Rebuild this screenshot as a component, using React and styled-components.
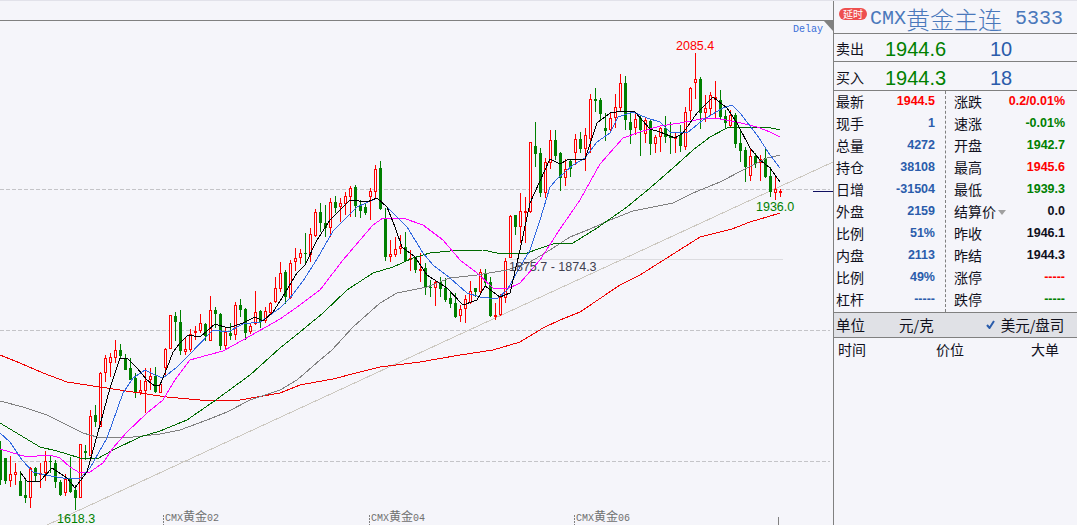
import React from 'react';
import styled, { createGlobalStyle } from 'styled-components';

const CJK = '"Noto Sans CJK SC", "Liberation Sans", sans-serif';
const NUM = '"Liberation Sans", "Noto Sans CJK SC", sans-serif';
const MONO = '"Liberation Mono", "Noto Sans CJK SC", monospace';
const BG = '#f5f5fa';
const RULE = '#808080';
const RED = '#ff0000';
const GREEN = '#008000';
const BLUE = '#2a5cab';
const DARK = '#10101c';

const tones = { red: RED, green: GREEN, blue: BLUE, dark: DARK };

const GlobalStyle = createGlobalStyle`
  html, body {
    margin: 0;
    padding: 0;
    background: ${BG};
  }
`;

const Page = styled.div`
  display: flex;
  width: 1077px;
  height: 525px;
  overflow: hidden;
  background: ${BG};
  border-top: 1px solid #e2e2ea;
  box-sizing: border-box;
`;

const ChartPane = styled.div`
  display: flex;
  flex-direction: column;
  width: 833px;
  flex: none;
`;

const TopStrip = styled.div`
  height: 19px;
  flex: none;
  border-bottom: 1px solid ${RULE};
`;

const ChartArea = styled.div`
  position: relative;
  flex: 1;
`;

const ChartSvg = styled.svg`
  display: block;
`;

const Corner = styled.div`
  position: absolute;
  top: 0;
  right: 0;
  width: 0;
  height: 0;
  border-top: 10px solid ${RULE};
  border-left: 9px solid transparent;
`;

const ChartLabel = styled.text`
  font-family: ${NUM};
  font-size: 12.5px;
  fill: ${(p) => p.$fill};
`;

const AxisLabel = styled.text`
  font-family: ${MONO};
  font-size: 10px;
  fill: #707070;
  tspan {
    font-family: ${CJK};
    font-size: 12px;
  }
`;

const DelayLabel = styled.text`
  font-family: ${MONO};
  font-size: 10px;
  fill: #3a6fd8;
`;

const Panel = styled.aside`
  flex: 1;
  display: flex;
  flex-direction: column;
  border-left: 1px solid ${RULE};
  color: ${DARK};
  font-family: ${CJK};
`;

const Header = styled.header`
  display: flex;
  align-items: flex-start;
  height: 32px;
  flex: none;
  padding-left: 5px;
  border-bottom: 1px solid ${RULE};
`;

const Badge = styled.span`
  flex: none;
  margin-top: 7px;
  width: 28px;
  height: 12px;
  border-radius: 6px;
  background: #ee4f4f;
  color: #fff;
  font-size: 10px;
  line-height: 12px;
  text-align: center;
`;

const Title = styled.span`
  display: flex;
  align-items: center;
  margin: 3px 0 0 3px;
  height: 28px;
  font-family: ${MONO};
  font-size: 20px;
  color: #4a78bb;
  white-space: pre;
  em {
    font-family: ${CJK};
    font-style: normal;
    font-weight: 300;
    font-size: 24px;
  }
`;

const Code = styled.span`
  margin-left: 13px;
`;

const QuoteRow = styled.div`
  display: grid;
  grid-template-columns: 49px 105px 1fr;
  align-items: center;
  height: ${(p) => p.$h}px;
  flex: none;
  padding: ${(p) => p.$drop}px 0 0 2px;
  font-size: 14px;
  border-bottom: 1px solid ${RULE};
`;

const QuoteValue = styled.span`
  margin-top: 3px;
  font-family: ${NUM};
  font-size: 20px;
  color: ${(p) => tones[p.$tone]};
`;

const StatGrid = styled.div`
  display: grid;
  grid-template-columns: 112px 1fr;
  height: 221px;
  flex: none;
  border-bottom: 1px solid ${RULE};
`;

const StatColumn = styled.div`
  display: flex;
  flex-direction: column;
  padding: ${(p) => (p.$right ? '0 12px 0 8px' : '0 10px 0 2px')};
  border-right: ${(p) => (p.$right ? 'none' : `1px dashed ${RULE}`)};
`;

const StatRow = styled.div`
  display: flex;
  align-items: center;
  justify-content: space-between;
  height: 20px;
  padding-bottom: 2px;
  font-size: 14px;
`;

const StatLabel = styled.span`
  display: flex;
  align-items: center;
`;

const StatValue = styled.span`
  font-family: ${NUM};
  font-size: 12.5px;
  font-weight: 700;
  color: ${(p) => tones[p.$tone]};
`;

const Caret = styled.i`
  margin: 3px 0 0 2px;
  width: 0;
  height: 0;
  border-top: 5px solid #a0a0a0;
  border-left: 4px solid transparent;
  border-right: 4px solid transparent;
`;

const UnitRow = styled.div`
  display: flex;
  align-items: center;
  height: 22px;
  flex: none;
  padding: 0 12px 2px 2px;
  font-size: 14.5px;
  background: #e0e1e6;
  border-bottom: 1px solid ${RULE};
`;

const UnitOption = styled.span`
  display: flex;
  align-items: center;
  gap: 6px;
  margin-left: ${(p) => p.$left}px;
`;

const TickColumns = styled.div`
  display: grid;
  grid-template-columns: 98px 95px 1fr;
  align-items: center;
  height: 21px;
  flex: none;
  padding-left: 4px;
  font-size: 14px;
`;

// [最高, 实体上沿, 实体下沿, 最低, 涨跌] — 每根K线间隔5px, 像素坐标
const candles = [
  [441,450,480,485,'g'],[458,458,481,484,'g'],[456,474,481,487,'r'],[463,472,475,485,'r'],
  [471,481,496,496,'g'],[480,495,498,503,'g'],[467,468,498,508,'r'],[467,468,476,482,'g'],
  [463,473,475,488,'r'],[451,461,473,481,'r'],[456,461,462,473,'g'],[460,463,482,488,'g'],
  [480,482,495,496,'g'],[474,479,493,496,'r'],[457,478,492,493,'g'],[485,490,498,510,'g'],
  [444,444,498,498,'r'],[445,451,453,460,'g'],[410,416,456,456,'r'],[405,415,422,427,'g'],
  [372,373,427,427,'r'],[355,358,373,382,'r'],[353,357,363,377,'r'],[340,350,358,363,'r'],
  [344,350,356,358,'g'],[354,358,370,370,'g'],[358,368,380,380,'g'],[373,378,393,398,'g'],
  [380,390,393,395,'r'],[368,381,391,413,'r'],[368,376,380,390,'r'],[367,376,392,393,'g'],
  [382,384,393,393,'r'],[348,349,368,375,'r'],[315,315,349,349,'r'],[312,316,322,341,'g'],
  [310,322,351,355,'g'],[338,349,352,355,'r'],[329,334,350,352,'r'],[326,331,333,340,'r'],
  [314,323,331,333,'r'],[323,324,336,341,'g'],[296,310,341,341,'r'],[307,310,314,328,'g'],
  [313,314,346,350,'g'],[328,332,346,350,'r'],[323,333,336,340,'g'],[302,305,335,340,'r'],
  [299,305,310,317,'g'],[308,309,333,340,'g'],[323,326,332,334,'r'],[291,312,324,325,'r'],
  [310,311,322,328,'g'],[307,311,321,323,'r'],[302,303,313,315,'r'],[277,288,302,303,'r'],
  [262,273,289,292,'r'],[270,272,297,304,'g'],[260,263,298,299,'r'],[248,258,262,271,'r'],
  [249,253,258,264,'r'],[233,253,254,263,'g'],[228,234,255,262,'r'],[209,212,236,237,'r'],
  [203,212,223,232,'g'],[205,223,228,237,'g'],[198,202,228,237,'r'],[196,202,208,213,'g'],
  [198,203,207,222,'r'],[192,196,204,215,'r'],[186,188,197,217,'r'],[185,187,206,217,'g'],
  [200,206,211,218,'g'],[203,207,213,215,'g'],[188,191,197,220,'r'],[165,169,192,198,'r'],
  [161,168,209,210,'g'],[208,218,257,261,'g'],[240,254,257,262,'r'],[237,249,255,257,'r'],
  [235,246,249,254,'r'],[232,247,261,262,'g'],[250,258,260,271,'r'],[257,257,270,273,'g'],
  [253,269,271,282,'r'],[263,268,287,295,'g'],[280,287,288,297,'g'],[281,282,288,306,'r'],
  [277,282,289,297,'g'],[278,288,300,302,'g'],[292,298,304,308,'g'],[293,303,317,318,'g'],
  [305,309,316,322,'r'],[295,299,309,323,'r'],[281,291,303,304,'r'],[288,288,292,297,'g'],
  [269,272,292,293,'r'],[269,273,283,287,'g'],[277,282,316,317,'g'],[303,315,316,320,'r'],
  [294,297,315,316,'r'],[258,261,298,303,'r'],[215,216,258,258,'r'],[215,215,227,235,'g'],
  [193,211,227,243,'r'],[197,211,212,243,'r'],[142,142,212,213,'r'],[122,146,154,167,'g'],
  [148,153,193,197,'g'],[158,162,193,198,'r'],[130,140,163,169,'r'],[130,140,156,160,'g'],
  [152,153,178,191,'g'],[159,169,178,186,'r'],[160,161,169,177,'g'],[134,139,153,165,'r'],
  [132,139,149,153,'g'],[128,135,149,171,'r'],[94,99,139,153,'r'],[88,99,101,112,'g'],
  [98,100,114,120,'g'],[113,128,131,141,'g'],[113,118,130,133,'r'],[94,107,118,128,'r'],
  [74,83,108,112,'r'],[76,83,120,130,'g'],[113,122,130,144,'g'],[113,119,128,135,'r'],
  [115,118,130,156,'g'],[118,120,134,143,'r'],[120,121,144,155,'g'],[135,137,144,153,'r'],
  [127,128,137,152,'r'],[116,128,137,143,'g'],[122,136,138,154,'g'],[132,137,139,153,'r'],
  [125,135,146,152,'g'],[107,112,147,150,'r'],[87,88,111,120,'r'],[53,79,83,99,'r'],
  [77,79,113,129,'g'],[95,108,113,122,'r'],[92,95,109,115,'r'],[81,97,100,118,'r'],
  [90,100,117,120,'g'],[110,116,123,128,'g'],[110,115,126,128,'r'],[113,115,144,148,'g'],
  [130,143,151,162,'g'],[147,150,167,182,'g'],[148,156,176,181,'r'],[153,156,164,168,'g'],
  [155,159,163,181,'r'],[148,158,177,178,'g'],[167,176,192,197,'g'],[177,189,193,200,'r'],
  [189,191,192,197,'r'],
];

const black = '20,472 27,481 40,481 52,468 67,478 75,488 87,472 100,425 110,388 120,358 127,358 137,368 147,380 155,386 160,385 167,368 173,352 180,343 188,335 200,337 215,324 228,328 243,323 255,317 263,321 273,312 282,298 297,273 305,265 317,240 330,220 350,200 367,202 377,198 387,207 395,227 402,247 415,257 427,275 447,288 463,305 477,300 485,286 500,297 510,293 520,250 530,203 550,159 560,164 567,160 585,159 597,123 610,113 622,111 635,112 650,129 660,132 675,138 683,133 690,123 697,113 713,97 727,108 737,123 750,148 760,160 770,168 780,182';
const blue = '0,433 10,442 22,460 33,472 45,475 63,478 80,478 90,468 107,438 123,393 133,378 145,370 155,375 163,378 177,367 187,357 213,330 228,332 243,324 260,322 280,308 290,298 303,281 317,259 333,231 357,207 377,198 387,207 407,227 423,253 433,265 450,278 467,293 480,297 497,299 507,290 520,267 530,250 540,220 550,187 557,179 573,165 585,158 597,142 610,133 618,117 633,112 647,118 660,122 670,132 687,133 703,120 723,108 732,105 740,113 757,135 770,155 780,168';
const magenta = '0,449 10,452 27,457 37,456 50,455 60,458 70,467 80,473 90,472 103,463 113,448 127,432 147,413 163,400 175,380 190,360 197,358 223,351 243,340 280,319 300,305 320,290 343,260 373,225 383,218 403,218 423,225 443,240 460,260 477,273 493,288 507,289 520,283 540,260 560,229 580,200 600,164 623,138 640,132 660,126 680,123 707,118 720,119 737,122 757,127 770,132 780,137';
const green = '0,423 20,435 40,447 57,451 80,458 97,459 113,450 140,437 160,431 187,420 213,402 250,375 280,348 300,332 323,313 347,290 373,273 393,267 413,258 430,253 450,251 483,250 497,253 527,253 538,249 553,244 573,243 597,228 627,207 650,188 673,168 693,150 710,137 727,128 747,127 767,127 780,130';
const grey = '0,401 23,407 47,415 67,425 83,433 97,437 133,437 160,434 180,430 207,420 227,412 250,400 280,390 297,380 320,360 332,350 353,327 380,303 397,293 427,287 450,278 477,275 507,270 530,262 550,250 570,237 590,229 610,220 633,211 673,203 693,193 720,182 743,170 767,158 780,155';
const redMa = '0,355 20,363 43,373 67,382 100,387 133,392 167,397 200,400 240,400 280,393 300,385 333,379 360,372 380,367 420,362 460,355 493,350 520,342 543,328 560,320 580,312 620,285 640,275 700,237 732,229 750,222 767,217 780,213';

const maLines = [
  { points: redMa, color: '#f00000' },
  { points: grey, color: '#808080' },
  { points: green, color: '#006a00' },
  { points: magenta, color: '#ff00ff' },
  { points: blue, color: '#3068e0' },
  { points: black, color: '#000000' },
];

const Candle = ({ data, x }) => {
  const [hi, top, bottom, lo, kind] = data;
  const color = kind === 'r' ? RED : GREEN;
  return (
    <g shapeRendering="crispEdges">
      <line x1={x + 0.5} x2={x + 0.5} y1={hi} y2={lo} stroke={color} />
      {kind === 'r' ? (
        <rect x={x - 0.5} y={top + 0.5} width={2} height={Math.max(bottom - top - 1, 1)} fill={BG} stroke={color} />
      ) : (
        <rect x={x - 1} y={top} width={3} height={Math.max(bottom - top, 1)} fill={color} />
      )}
    </g>
  );
};

function PriceChart() {
  return (
    <ChartSvg width="833" height="504" viewBox="0 21 833 504">
      {[189.5, 330.5, 461.5].map((y) => (
        <line key={y} x1="0" x2="830" y1={y} y2={y} stroke="#c4c4c8" strokeDasharray="4 2" shapeRendering="crispEdges" />
      ))}
      <line x1="510" x2="783" y1="259.5" y2="259.5" stroke="#dcdce0" shapeRendering="crispEdges" />
      <line x1="47" y1="525" x2="833" y2="162" stroke="#ccc8c0" shapeRendering="crispEdges" />
      <line x1="813" x2="833" y1="191.5" y2="191.5" stroke="#101060" shapeRendering="crispEdges" />
      {candles.map((c, i) => (
        <Candle key={i} data={c} x={i * 5} />
      ))}
      {maLines.map((l) => (
        <polyline key={l.color} points={l.points} fill="none" stroke={l.color} shapeRendering="crispEdges" />
      ))}
      <DelayLabel x="793" y="32">Delay</DelayLabel>
      <ChartLabel x="676" y="50" $fill={RED}>2085.4</ChartLabel>
      <ChartLabel x="756" y="211" $fill={GREEN}>1936.0</ChartLabel>
      <ChartLabel x="57" y="523" $fill={GREEN}>1618.3</ChartLabel>
      <ChartLabel x="509" y="271" $fill="#404050">1875.7 - 1874.3</ChartLabel>
      {[
        { x: 163, suffix: '02' },
        { x: 369, suffix: '04' },
        { x: 574, suffix: '06' },
      ].map((t) => (
        <g key={t.x}>
          <line x1={t.x + 0.5} x2={t.x + 0.5} y1="515" y2="525" stroke="#808080" strokeDasharray="2 1" shapeRendering="crispEdges" />
          <AxisLabel x={t.x + 2} y="521">CMX<tspan>黄金</tspan>{t.suffix}</AxisLabel>
        </g>
      ))}
      <line x1="778.5" x2="778.5" y1="517" y2="525" stroke="#808080" shapeRendering="crispEdges" />
    </ChartSvg>
  );
}

const leftStats = [
  ['最新', '1944.5', 'red'],
  ['现手', '1', 'blue'],
  ['总量', '4272', 'blue'],
  ['持仓', '38108', 'blue'],
  ['日增', '-31504', 'blue'],
  ['外盘', '2159', 'blue'],
  ['比例', '51%', 'blue'],
  ['内盘', '2113', 'blue'],
  ['比例', '49%', 'blue'],
  ['杠杆', '-----', 'blue'],
];

const rightStats = [
  ['涨跌', '0.2/0.01%', 'red'],
  ['速涨', '-0.01%', 'green'],
  ['开盘', '1942.7', 'green'],
  ['最高', '1945.6', 'red'],
  ['最低', '1939.3', 'green'],
  ['结算价', '0.0', 'dark', true],
  ['昨收', '1946.1', 'dark'],
  ['昨结', '1944.3', 'dark'],
  ['涨停', '-----', 'red'],
  ['跌停', '-----', 'green'],
];

function QuotePanel() {
  return (
    <Panel>
      <Header>
        <Badge>延时</Badge>
        <Title>
          CMX<em>黄金主连</em>
          <Code>5333</Code>
        </Title>
      </Header>
      <QuoteRow $h={27} $drop={0}>
        <span>卖出</span>
        <QuoteValue $tone="green">1944.6</QuoteValue>
        <QuoteValue $tone="blue">10</QuoteValue>
      </QuoteRow>
      <QuoteRow $h={26} $drop={2}>
        <span>买入</span>
        <QuoteValue $tone="green">1944.3</QuoteValue>
        <QuoteValue $tone="blue">18</QuoteValue>
      </QuoteRow>
      <StatGrid>
        <StatColumn>
          {leftStats.map(([label, value, tone]) => (
            <StatRow key={label + value}>
              <StatLabel>{label}</StatLabel>
              <StatValue $tone={tone}>{value}</StatValue>
            </StatRow>
          ))}
        </StatColumn>
        <StatColumn $right>
          {rightStats.map(([label, value, tone, caret]) => (
            <StatRow key={label}>
              <StatLabel>
                {label}
                {caret && <Caret />}
              </StatLabel>
              <StatValue $tone={tone}>{value}</StatValue>
            </StatRow>
          ))}
        </StatColumn>
      </StatGrid>
      <UnitRow>
        <span>单位</span>
        <UnitOption $left={34}>元/克</UnitOption>
        <UnitOption $left={52}>
          <svg width="9" height="9" viewBox="0 0 9 9">
            <path d="M1 5 L3.5 8 L8 1" fill="none" stroke="#2a5cab" strokeWidth="2" />
          </svg>
          美元/盘司
        </UnitOption>
      </UnitRow>
      <TickColumns>
        <span>时间</span>
        <span>价位</span>
        <span>大单</span>
      </TickColumns>
    </Panel>
  );
}

export default function App() {
  return (
    <>
      <GlobalStyle />
      <Page>
        <ChartPane>
          <TopStrip />
          <ChartArea>
            <PriceChart />
            <Corner />
          </ChartArea>
        </ChartPane>
        <QuotePanel />
      </Page>
    </>
  );
}
